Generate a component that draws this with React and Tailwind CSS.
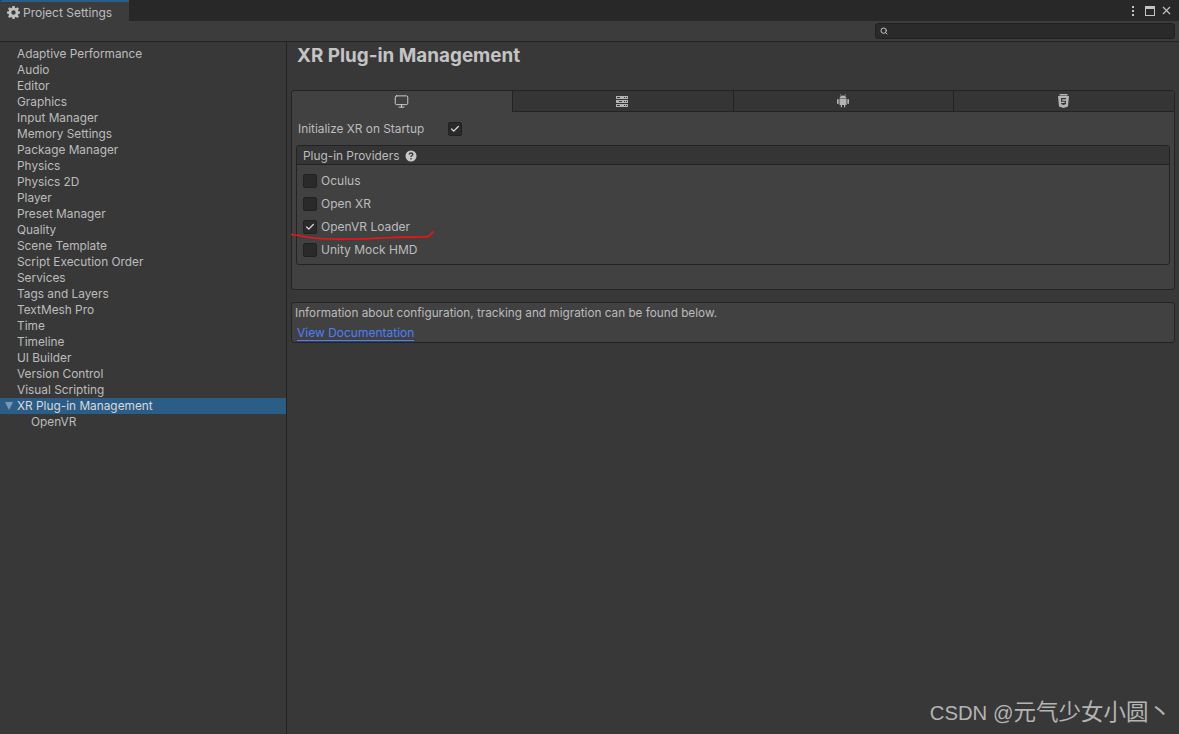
import { Search, X, Check, Monitor } from 'lucide-react';

const sidebarItems = [
  'Adaptive Performance', 'Audio', 'Editor', 'Graphics', 'Input Manager', 'Memory Settings',
  'Package Manager', 'Physics', 'Physics 2D', 'Player', 'Preset Manager', 'Quality',
  'Scene Template', 'Script Execution Order', 'Services', 'Tags and Layers', 'TextMesh Pro',
  'Time', 'Timeline', 'UI Builder', 'Version Control', 'Visual Scripting',
];

const providers = [
  { name: 'Oculus', checked: false },
  { name: 'Open XR', checked: false },
  { name: 'OpenVR Loader', checked: true },
  { name: 'Unity Mock HMD', checked: false },
];

const Checkbox = ({ checked }) => (
  <div className="w-[14px] h-[14px] rounded-[2px] bg-[#2a2a2a] border border-[#212121] flex items-center justify-center flex-shrink-0">
    {checked && <Check size={10} strokeWidth={3} className="text-[#dcdcdc]" />}
  </div>
);

const GearIcon = () => (
  <svg width="13" height="13" viewBox="0 0 13 13" fill="#c0c0c0">
    <path fillRule="evenodd" d="M5.400 0h2.200l.3 1.800 1 .4L10.400 1.200 12 2.700l-1.100 1.500.4 1L13 5.500v2.100l-1.700.3-.4 1 1 1.500-1.500 1.500-1.500-1-1 .4L7.600 13H5.400l-.3-1.700-1-.4-1.500 1-1.500-1.500 1-1.500-.4-1L0 7.600V5.500l1.700-.3.4-1L1 2.700 2.600 1.200l1.500 1 1-.4zM6.500 4.300a2.200 2.200 0 1 0 0 4.400 2.200 2.200 0 0 0 0-4.400z" />
  </svg>
);

const ServerIcon = () => (
  <svg width="12" height="11" viewBox="0 0 12 11" fill="#b4b4b4">
    <path d="M0 0h12v3H0zM0 4h12v3H0zM0 8h12v3H0z" />
    <path d="M1 1h3v1H1zM8 1h1v1H8zM10 1h1v1h-1zM3 5h3v1H3zM8 5h1v1H8zM10 5h1v1h-1zM1 9h3v1H1zM8 9h1v1H8zM10 9h1v1h-1z" fill="#353535" />
  </svg>
);

const AndroidIcon = () => (
  <svg width="12" height="14" viewBox="0 0 12 14" fill="#b4b4b4">
    <path d="M2.500 4.400C2.700 2.600 4.200 1.500 6 1.500s3.300 1.100 3.500 2.900z" />
    <path d="M3.200 0.200l1 1.600M8.800 0.200l-1 1.600" stroke="#b4b4b4" strokeWidth="0.700" />
    <path d="M2.500 5h7v6H8.200v2.200H7V11H5.000v2.200H3.800V11H2.500z" />
    <rect x="0" y="5" width="1.700" height="5" rx="0.800" />
    <rect x="10.300" y="5" width="1.700" height="5" rx="0.800" />
  </svg>
);

const Html5Icon = () => (
  <svg width="11" height="14" viewBox="0 0 11 14" fill="#b4b4b4">
    <path d="M1.500 0h8v1.500h-8z" />
    <path fillRule="evenodd" d="M0 2h11l-1 10.500L5.500 14 1 12.500zM3 4v3.700h3.700v1.300H3.200v1.100l2.300.8 2.400-.8V6.700H4.200V5.200H8V4z" />
  </svg>
);

const QuestionIcon = () => (
  <svg width="12" height="12" viewBox="0 0 12 12">
    <circle cx="6" cy="6" r="5.500" fill="#c8c8c8" />
    <path d="M4.200 4.600C4.300 3.600 5 3 6 3s1.800.6 1.800 1.500S6 5.700 6 7" fill="none" stroke="#3a3a3a" strokeWidth="1.400" />
    <rect x="5.300" y="8" width="1.400" height="1.400" fill="#3a3a3a" />
  </svg>
);

export default function App() {
  return (
    <div className="relative w-[1179px] h-[734px] overflow-hidden bg-[#383838] text-[#bcbcbc] text-[11.85px] leading-4 flex flex-col" style={{ fontFamily: 'Inter, "Noto Sans CJK SC", sans-serif' }}>
      {/* window title strip */}
      <div className="h-[21px] bg-[#282828] flex items-stretch justify-between flex-shrink-0">
        <div className="w-[129px] bg-[#3c3c3c] border-t-2 border-[#2c5d87] flex items-center gap-[3px] pl-[7px] pt-[2px] rounded-tl-[2px]">
          <GearIcon />
          <span className="text-[12px]">Project Settings</span>
        </div>
        <div className="flex items-center pr-[6px]">
          <div className="flex flex-col gap-[2px]">
            <div className="w-[2px] h-[2px] bg-[#c4c4c4]" />
            <div className="w-[2px] h-[2px] bg-[#c4c4c4]" />
            <div className="w-[2px] h-[2px] bg-[#c4c4c4]" />
          </div>
          <div className="w-[10px] h-[10px] ml-[11px] border border-[#c4c4c4] border-t-[3px]" />
          <X size={13} strokeWidth={2} className="text-[#c4c4c4] ml-[5px]" />
        </div>
      </div>

      {/* toolbar */}
      <div className="h-[21px] bg-[#3c3c3c] border-b border-[#232323] flex items-center justify-end pr-[4px] flex-shrink-0">
        <div className="w-[300px] h-[16px] rounded-[3px] bg-[#2a2a2a] border border-[#212121] flex items-center pl-[4px]">
          <Search size={8} strokeWidth={3} className="text-[#c4c4c4]" />
        </div>
      </div>

      <div className="flex flex-1 min-h-0">
        {/* sidebar */}
        <div className="w-[287px] flex-shrink-0 border-r border-[#232323] pt-[4px]">
          {sidebarItems.map((item) => (
            <div key={item} className="h-4 pl-[17px] whitespace-nowrap">{item}</div>
          ))}
          <div className="h-4 bg-[#2c5d87] flex items-center text-[#d8d8d8] whitespace-nowrap">
            <div className="ml-[5px] mr-[4px] w-0 h-0 border-l-[4px] border-r-[4px] border-t-[8px] border-l-transparent border-r-transparent border-t-[#7b98b2]" />
            XR Plug-in Management
          </div>
          <div className="h-4 pl-[31px]">OpenVR</div>
        </div>

        {/* main panel */}
        <div className="flex-1 min-w-0 pr-[4px] pl-[4px]">
          <h1 className="text-[18.850px] leading-6 font-bold text-[#c4c4c4] pl-[6px] pt-[2px] h-[48px]">XR Plug-in Management</h1>

          <div className="bg-[#414141] border border-[#232323] rounded-[3px] h-[200px]">
            <div className="flex h-[21px]">
              <div className="w-[220px] flex items-center justify-center pr-[2px] rounded-tl-[3px]">
                <Monitor size={15} strokeWidth={1.500} className="text-[#d2d2d2]" />
              </div>
              <div className="w-[221px] bg-[#353535] border-l border-b border-[#232323] flex items-center justify-center pr-[2px]"><ServerIcon /></div>
              <div className="w-[220px] bg-[#353535] border-l border-b border-[#232323] flex items-center justify-center pr-[2px]"><AndroidIcon /></div>
              <div className="flex-1 bg-[#353535] border-l border-b border-[#232323] rounded-tr-[3px] flex items-center justify-center pr-[2px]"><Html5Icon /></div>
            </div>

            <div className="flex items-center h-[20px] mt-[7px] pl-[6px]">
              <span className="w-[150px] whitespace-nowrap">Initialize XR on Startup</span>
              <Checkbox checked />
            </div>

            <div className="mx-[4px] mt-[6px] border border-[#232323] rounded-[3px] h-[120px]">
              <div className="h-[19px] bg-[#353535] border-b border-[#232323] flex items-center gap-[6px] pl-[6px] pt-[1px] rounded-t-[3px]">
                <span>Plug-in Providers</span>
                <QuestionIcon />
              </div>
              <div className="pt-[4px] text-[12px]">
                {providers.map((p) => (
                  <div key={p.name} className="h-[23px] flex items-center gap-[4px] pl-[6px] whitespace-nowrap">
                    <Checkbox checked={p.checked} />
                    <span>{p.name}</span>
                  </div>
                ))}
              </div>
            </div>
          </div>

          <div className="mt-[12px] bg-[#414141] border border-[#232323] rounded-[3px] h-[41px] pl-[3px]">
            <div className="h-[20px] flex items-center text-[11.75px]">Information about configuration, tracking and migration can be found below.</div>
            <a href="#" className="inline-block ml-[2px] mt-[3px] text-[12px] leading-[14px] text-[#4c7eff] border-b border-[#4c7eff]">View Documentation</a>
          </div>
        </div>
      </div>

      {/* hand-drawn underline */}
      <svg className="absolute left-[285px] top-[225px] pointer-events-none" width="155" height="20" viewBox="0 0 155 20" fill="none">
        <path d="M6 9.500C12 10 16 10.500 22 12C34 14 48 14.500 66 14C84 14 94 13 108 12.500C122 12 135 12.500 143 11.500C146 10 147 7.500 148.500 6.500" stroke="#f01414" strokeWidth="1.700" />
      </svg>

      {/* watermark */}
      <div className="absolute right-[8px] top-[699px] text-[20.300px] leading-7 text-[#b4b4b4] whitespace-nowrap" style={{ fontFamily: '"Liberation Sans", "Noto Sans CJK SC", sans-serif' }}>CSDN @<span className="text-[22.500px]">元气少女小圆丶</span></div>
    </div>
  );
}
